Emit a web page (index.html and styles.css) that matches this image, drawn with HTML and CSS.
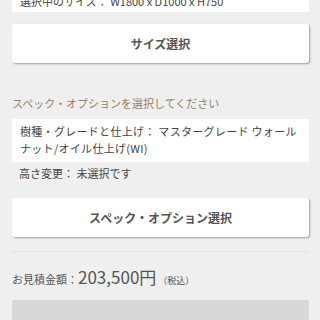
FILE: index.html
```html
<!DOCTYPE html>
<html lang="ja">
<head>
    <meta charset="UTF-8">
    <title>お見積り</title>
    <link rel="stylesheet" href="styles.css">
</head>
<body>
<div class="page">
    <div class="size-box">
        <p>選択中のサイズ： W1800 x D1000 x H750</p>
    </div>
    <a class="btn" href="">サイズ選択</a>

    <h2 class="spec-title">スペック・オプションを選択してください</h2>
    <div class="spec-box">
        <p>樹種・グレードと仕上げ： マスターグレード ウォールナット/オイル仕上げ(WI)</p>
    </div>
    <p class="spec-note">高さ変更： 未選択です</p>
    <a class="btn" href="">スペック・オプション選択</a>

    <hr class="line">

    <p class="price">お見積金額：<span class="num">203,500円</span><span class="tax">（税込）</span></p>
    <div class="btn-off"></div>
</div>
</body>
</html>
```

FILE: styles.css
```css
html, body {
    margin: 0;
    padding: 0;
    background: #efefef;
    font-family: "Noto Sans CJK JP", "Noto Sans", sans-serif;
    color: #444;
}

p, h2 {
    margin: 0;
}

.page {
    padding: 0 11px 0 12px;
    height: 320px;
    overflow: hidden;
}

.size-box {
    background: #fff;
    margin-top: -6px;
    padding: 0 8px;
    height: 18px;
    font-size: 11px;
    line-height: 14px;
}

.btn {
    display: block;
    height: 39px;
    line-height: 39px;
    margin-top: 12px;
    background: #fff;
    border-radius: 3px;
    box-shadow: 1px 1px 2px rgba(0, 0, 0, 0.35);
    text-align: center;
    font-size: 12px;
    font-weight: bold;
    color: #555;
    text-decoration: none;
}

.spec-title {
    margin-top: 32px;
    font-size: 11px;
    line-height: 16px;
    font-weight: normal;
    color: #97815f;
}

.spec-box {
    margin-top: 8px;
    background: #fff;
    padding: 4px 8px 5px;
    font-size: 11px;
    line-height: 17px;
    letter-spacing: 0.3px;
}

.spec-note {
    padding: 2px 7px 0;
    font-size: 11px;
    line-height: 18px;
}

.spec-note + .btn {
    margin-top: 16px;
}

.line {
    border: 0;
    border-top: 1px solid #e2e2e2;
    margin: 14px 0 0;
}

.price {
    margin-top: 14px;
    font-size: 11px;
    line-height: 22px;
    color: #555;
}

.price .num {
    font-size: 17px;
}

.price .tax {
    font-size: 9px;
    margin-left: 2px;
}

.btn-off {
    margin-top: 8px;
    height: 40px;
    background: #d8d8d8;
    border-radius: 3px;
}
```
